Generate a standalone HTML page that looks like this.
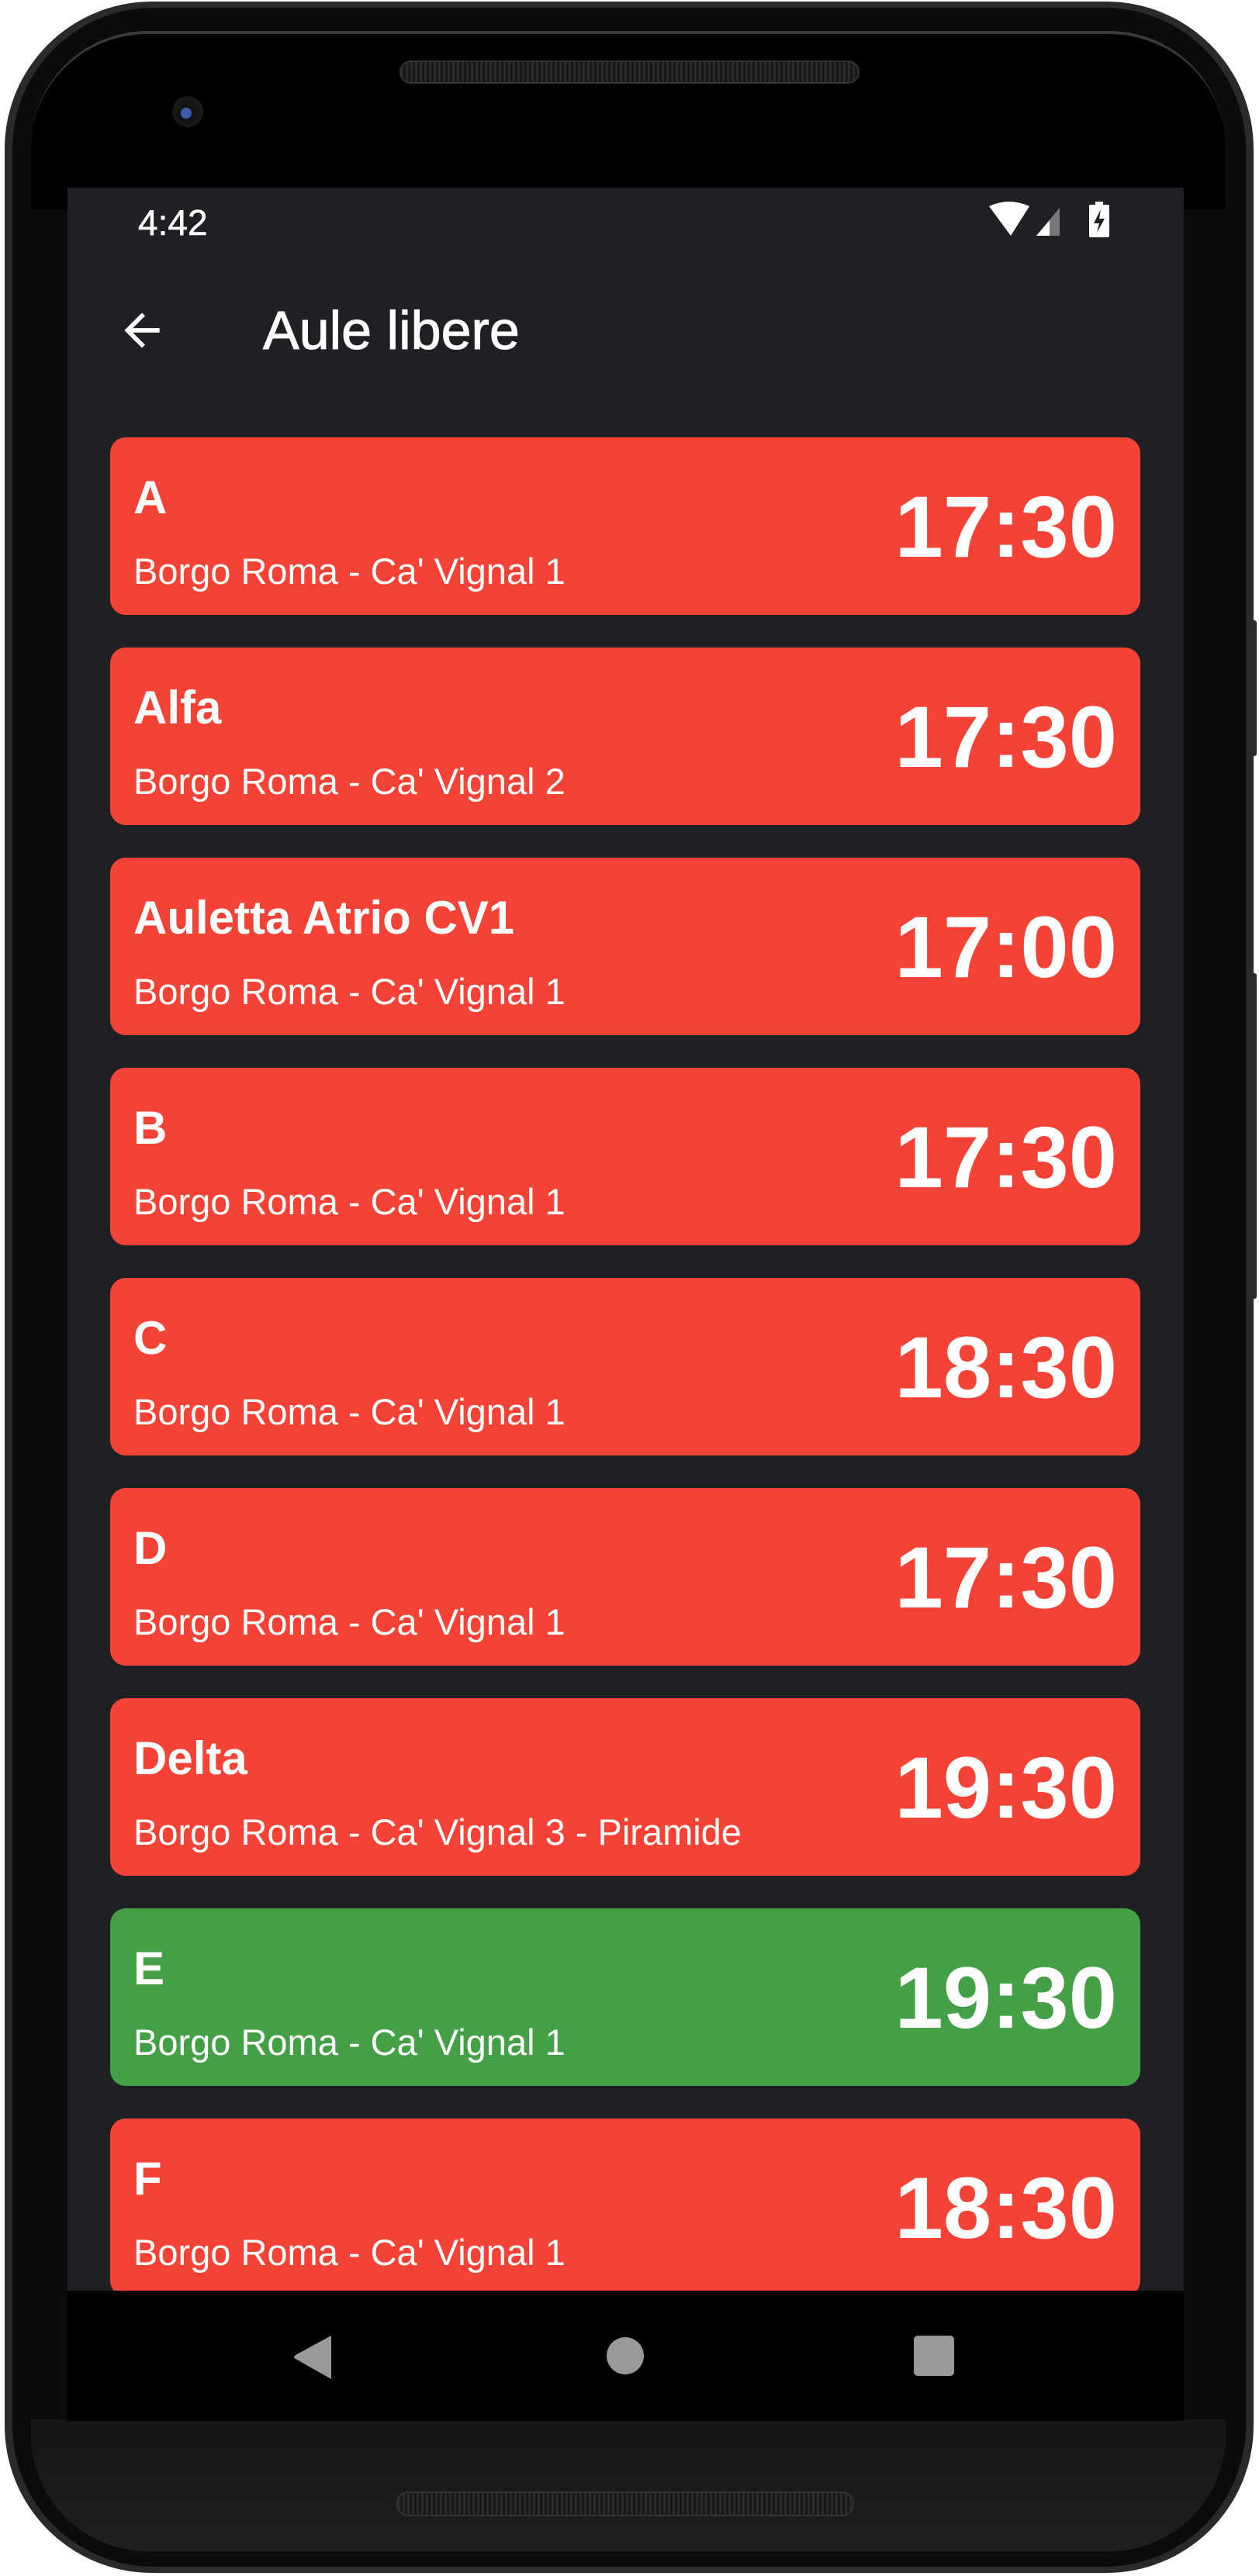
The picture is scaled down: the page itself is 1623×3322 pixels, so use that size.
<!DOCTYPE html>
<html><head><meta charset="utf-8"><style>
*{margin:0;padding:0;box-sizing:border-box}
html,body{width:1623px;height:3322px;background:#fff;overflow:hidden;font-family:"Liberation Sans",Roboto,sans-serif}
.phone{position:absolute;left:6px;top:2px;width:1610px;height:3316px;border-radius:190px;background:#2a2a2a;}
.phone2{position:absolute;left:16px;top:10px;width:1590px;height:3300px;border-radius:182px;background:#0b0b0b;}
.topbez{position:absolute;left:40px;top:40px;width:1540px;height:230px;border-radius:150px 150px 0 0;background:#000;border-top:4px solid #3a3a3a}
.botbez{position:absolute;left:40px;top:3120px;width:1540px;height:170px;border-radius:0 0 150px 150px;background:linear-gradient(#151515,#1f1f1f)}
.spk{position:absolute;left:515px;width:593px;height:30px;border-radius:15px;background:repeating-linear-gradient(90deg,#2a2a2a 0 3px,#181818 3px 6px);border:2px solid #333}
.cam{position:absolute;left:222px;top:124px;width:40px;height:40px;border-radius:50%;background:radial-gradient(circle at 45% 55%,#3d5fb0 0 6px,#111 8px,#1a1a1a 20px)}
.btn{position:absolute;left:1612px;width:8px;background:#2a2a2a;border-radius:3px}
.screen{position:absolute;left:87px;top:242px;width:1439px;height:2880px;background:#1f2024;overflow:hidden}
.time{position:absolute;left:91px;top:18px;color:#fff;font-size:46px;-webkit-text-stroke:0.6px #fff}
.title{position:absolute;left:252px;top:144px;color:#fff;font-size:70px;-webkit-text-stroke:1px #fff}
.card{position:absolute;left:55px;width:1328px;height:229px;border-radius:20px;background:#f44336;color:#fff}
.card.g{background:#43a047}
.card .n{position:absolute;left:30px;top:43px;font-size:60px;font-weight:bold;white-space:nowrap}
.card .s{position:absolute;left:30px;top:145px;font-size:47px;white-space:nowrap}
.card .t{position:absolute;right:30px;top:52px;font-size:112px;font-weight:bold;line-height:1.15}
.nav{position:absolute;left:0;top:2712px;width:1439px;height:168px;background:#000}
</style></head><body>
<div class="phone"></div><div class="phone2"></div>
<div class="btn" style="top:800px;height:175px"></div>
<div class="btn" style="top:1255px;height:420px"></div>
<div class="topbez"></div>
<div class="spk" style="top:78px"></div>
<div class="cam"></div>
<div class="botbez"></div>
<div class="spk" style="top:3213px;height:32px;left:511px;width:590px"></div>
<div class="screen">
 <div class="time">4:42</div>
 <svg style="position:absolute;left:1186px;top:18px" width="160" height="48" viewBox="0 0 160 48">
  <path d="M2 6 Q28 -6 54 6 L30 44 Z" fill="#fff"/>
  <path d="M63 44 L93 8 L93 44 Z" fill="#777"/><path d="M63 44 L80 24 L80 44 Z" fill="#fff"/>
  <rect x="131" y="4" width="26" height="42" rx="2" fill="#fff"/><rect x="139" y="0" width="10" height="6" fill="#fff"/>
  <path d="M146 10 L137 28 L144 28 L141 40 L151 22 L144 22 Z" fill="#1f2024"/>
 </svg>
 <svg style="position:absolute;left:62px;top:150px" width="68" height="68" viewBox="0 0 24 24"><path d="M20 11H7.83l5.59-5.59L12 4l-8 8 8 8 1.41-1.41L7.83 13H20v-2z" fill="#fff"/></svg>
 <div class="title">Aule libere</div>
 <div class="card" style="top:322px"><div class="n">A</div><div class="s">Borgo Roma - Ca' Vignal 1</div><div class="t">17:30</div></div>
 <div class="card" style="top:593px"><div class="n">Alfa</div><div class="s">Borgo Roma - Ca' Vignal 2</div><div class="t">17:30</div></div>
 <div class="card" style="top:864px"><div class="n">Auletta Atrio CV1</div><div class="s">Borgo Roma - Ca' Vignal 1</div><div class="t">17:00</div></div>
 <div class="card" style="top:1135px"><div class="n">B</div><div class="s">Borgo Roma - Ca' Vignal 1</div><div class="t">17:30</div></div>
 <div class="card" style="top:1406px"><div class="n">C</div><div class="s">Borgo Roma - Ca' Vignal 1</div><div class="t">18:30</div></div>
 <div class="card" style="top:1677px"><div class="n">D</div><div class="s">Borgo Roma - Ca' Vignal 1</div><div class="t">17:30</div></div>
 <div class="card" style="top:1948px"><div class="n">Delta</div><div class="s">Borgo Roma - Ca' Vignal 3 - Piramide</div><div class="t">19:30</div></div>
 <div class="card g" style="top:2219px"><div class="n">E</div><div class="s">Borgo Roma - Ca' Vignal 1</div><div class="t">19:30</div></div>
 <div class="card" style="top:2490px"><div class="n">F</div><div class="s">Borgo Roma - Ca' Vignal 1</div><div class="t">18:30</div></div>
 <div class="nav">
  <svg style="position:absolute;left:290px;top:56px" width="52" height="60" viewBox="0 0 52 60"><path d="M50 2 L50 58 L4 32 Q0 30 4 27 Z" fill="#999"/></svg>
  <div style="position:absolute;left:695px;top:60px;width:48px;height:48px;border-radius:50%;background:#999"></div>
  <div style="position:absolute;left:1091px;top:58px;width:52px;height:52px;border-radius:5px;background:#999"></div>
 </div>
</div>
</body></html>
